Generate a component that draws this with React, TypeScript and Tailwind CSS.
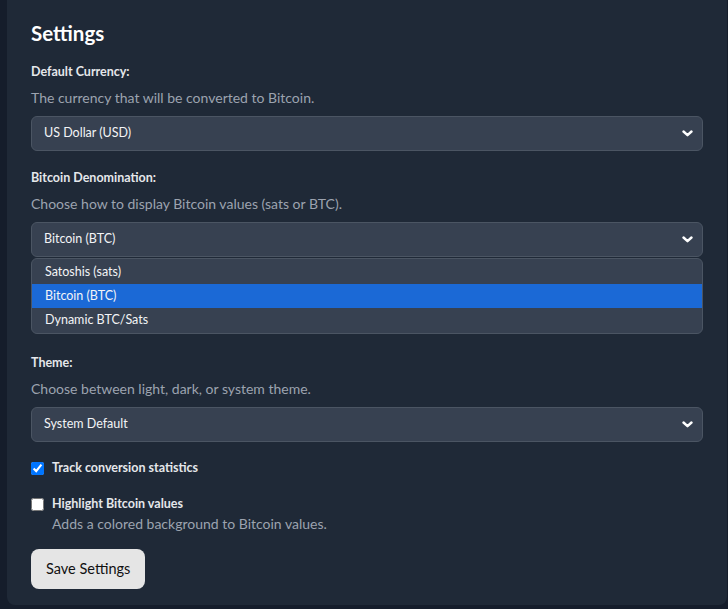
import React, { useState } from 'react';

const font = { fontFamily: 'Lato, "Noto Sans", sans-serif' };

const Chevron = () => (
  <svg width="11" height="7" viewBox="0 0 11 7" className="shrink-0">
    <polyline points="1.5,1.5 5.5,5.2 9.5,1.5" fill="none" stroke="#ffffff" strokeWidth="2.4" strokeLinecap="round" strokeLinejoin="round" />
  </svg>
);

interface SelectBoxProps {
  value: string;
}

const SelectBox: React.FC<SelectBoxProps> = ({ value }) => (
  <div className="flex h-[35px] items-center justify-between rounded-md border border-[#4b5563] bg-[#374151] pl-[12px] pr-[9px] text-[12.5px] text-[#f3f4f6]">
    <span>{value}</span>
    <Chevron />
  </div>
);

const denominations = ['Satoshis (sats)', 'Bitcoin (BTC)', 'Dynamic BTC/Sats'];

export default function App() {
  const [denom, setDenom] = useState('Bitcoin (BTC)');
  const [track, setTrack] = useState(true);
  const [highlight, setHighlight] = useState(false);

  return (
    <div className="min-h-screen bg-[#151d2b] pl-[7px] pr-[1px]" style={font}>
      <div className="rounded-b-lg bg-[#1f2937] px-6 pt-[19px] pb-[16px]">
        <h2 className="mb-[15px] text-[20.5px] leading-[28px] font-bold text-white">Settings</h2>

        {/* Default currency */}
        <div className="mb-[17px]">
          <label className="block text-[12.5px] leading-[20px] font-bold text-[#e5e7eb]">Default Currency:</label>
          <p className="mt-[6px] mb-[8px] text-[14px] leading-[20px] text-[#9ca3af]">The currency that will be converted to Bitcoin.</p>
          <SelectBox value="US Dollar (USD)" />
        </div>

        {/* Bitcoin denomination, list open */}
        <div className="mb-4">
          <label className="block text-[12.5px] leading-[20px] font-bold text-[#e5e7eb]">Bitcoin Denomination:</label>
          <p className="mt-[6px] mb-[8px] text-[14px] leading-[20px] text-[#9ca3af]">Choose how to display Bitcoin values (sats or BTC).</p>
          <div className="relative">
            <SelectBox value={denom} />
            <div className="absolute top-[36px] left-0 right-0 z-10 rounded-md border border-[#4b5563] bg-[#374151] py-px text-[12.5px] text-[#f3f4f6]">
              {denominations.map((d) => (
                <div
                  key={d}
                  onClick={() => setDenom(d)}
                  className={`flex h-[24px] items-center pl-[13px] ${d === denom ? 'bg-[#1b69d6]' : ''}`}
                >
                  {d}
                </div>
              ))}
            </div>
          </div>
          {/* content hidden under the open list */}
          <div className="h-[80px]" />
        </div>

        {/* Theme */}
        <div className="mb-4">
          <label className="block text-[12.5px] leading-[20px] font-bold text-[#e5e7eb]">Theme:</label>
          <p className="mt-[6px] mb-[8px] text-[14px] leading-[20px] text-[#9ca3af]">Choose between light, dark, or system theme.</p>
          <SelectBox value="System Default" />
        </div>

        <div className="mb-4 flex items-center gap-[8px]">
          <input
            type="checkbox"
            checked={track}
            onChange={(e) => setTrack(e.target.checked)}
            className="m-0 h-[13px] w-[13px] accent-[#0075ff]"
          />
          <span className="text-[12.5px] leading-[20px] font-bold text-[#e5e7eb]">Track conversion statistics</span>
        </div>

        <div className="mb-[15px] flex items-start gap-[8px]">
          <input
            type="checkbox"
            checked={highlight}
            onChange={(e) => setHighlight(e.target.checked)}
            className="m-0 mt-[4px] h-[13px] w-[13px]"
          />
          <div>
            <div className="text-[12.5px] leading-[20px] font-bold text-[#e5e7eb]">Highlight Bitcoin values</div>
            <div className="text-[14px] leading-[20px] text-[#9ca3af]">Adds a colored background to Bitcoin values.</div>
          </div>
        </div>

        <button className="h-[40px] rounded-lg bg-[#e5e5e5] px-[15px] text-[14.5px] text-[#111111]">Save Settings</button>
      </div>
    </div>
  );
}
